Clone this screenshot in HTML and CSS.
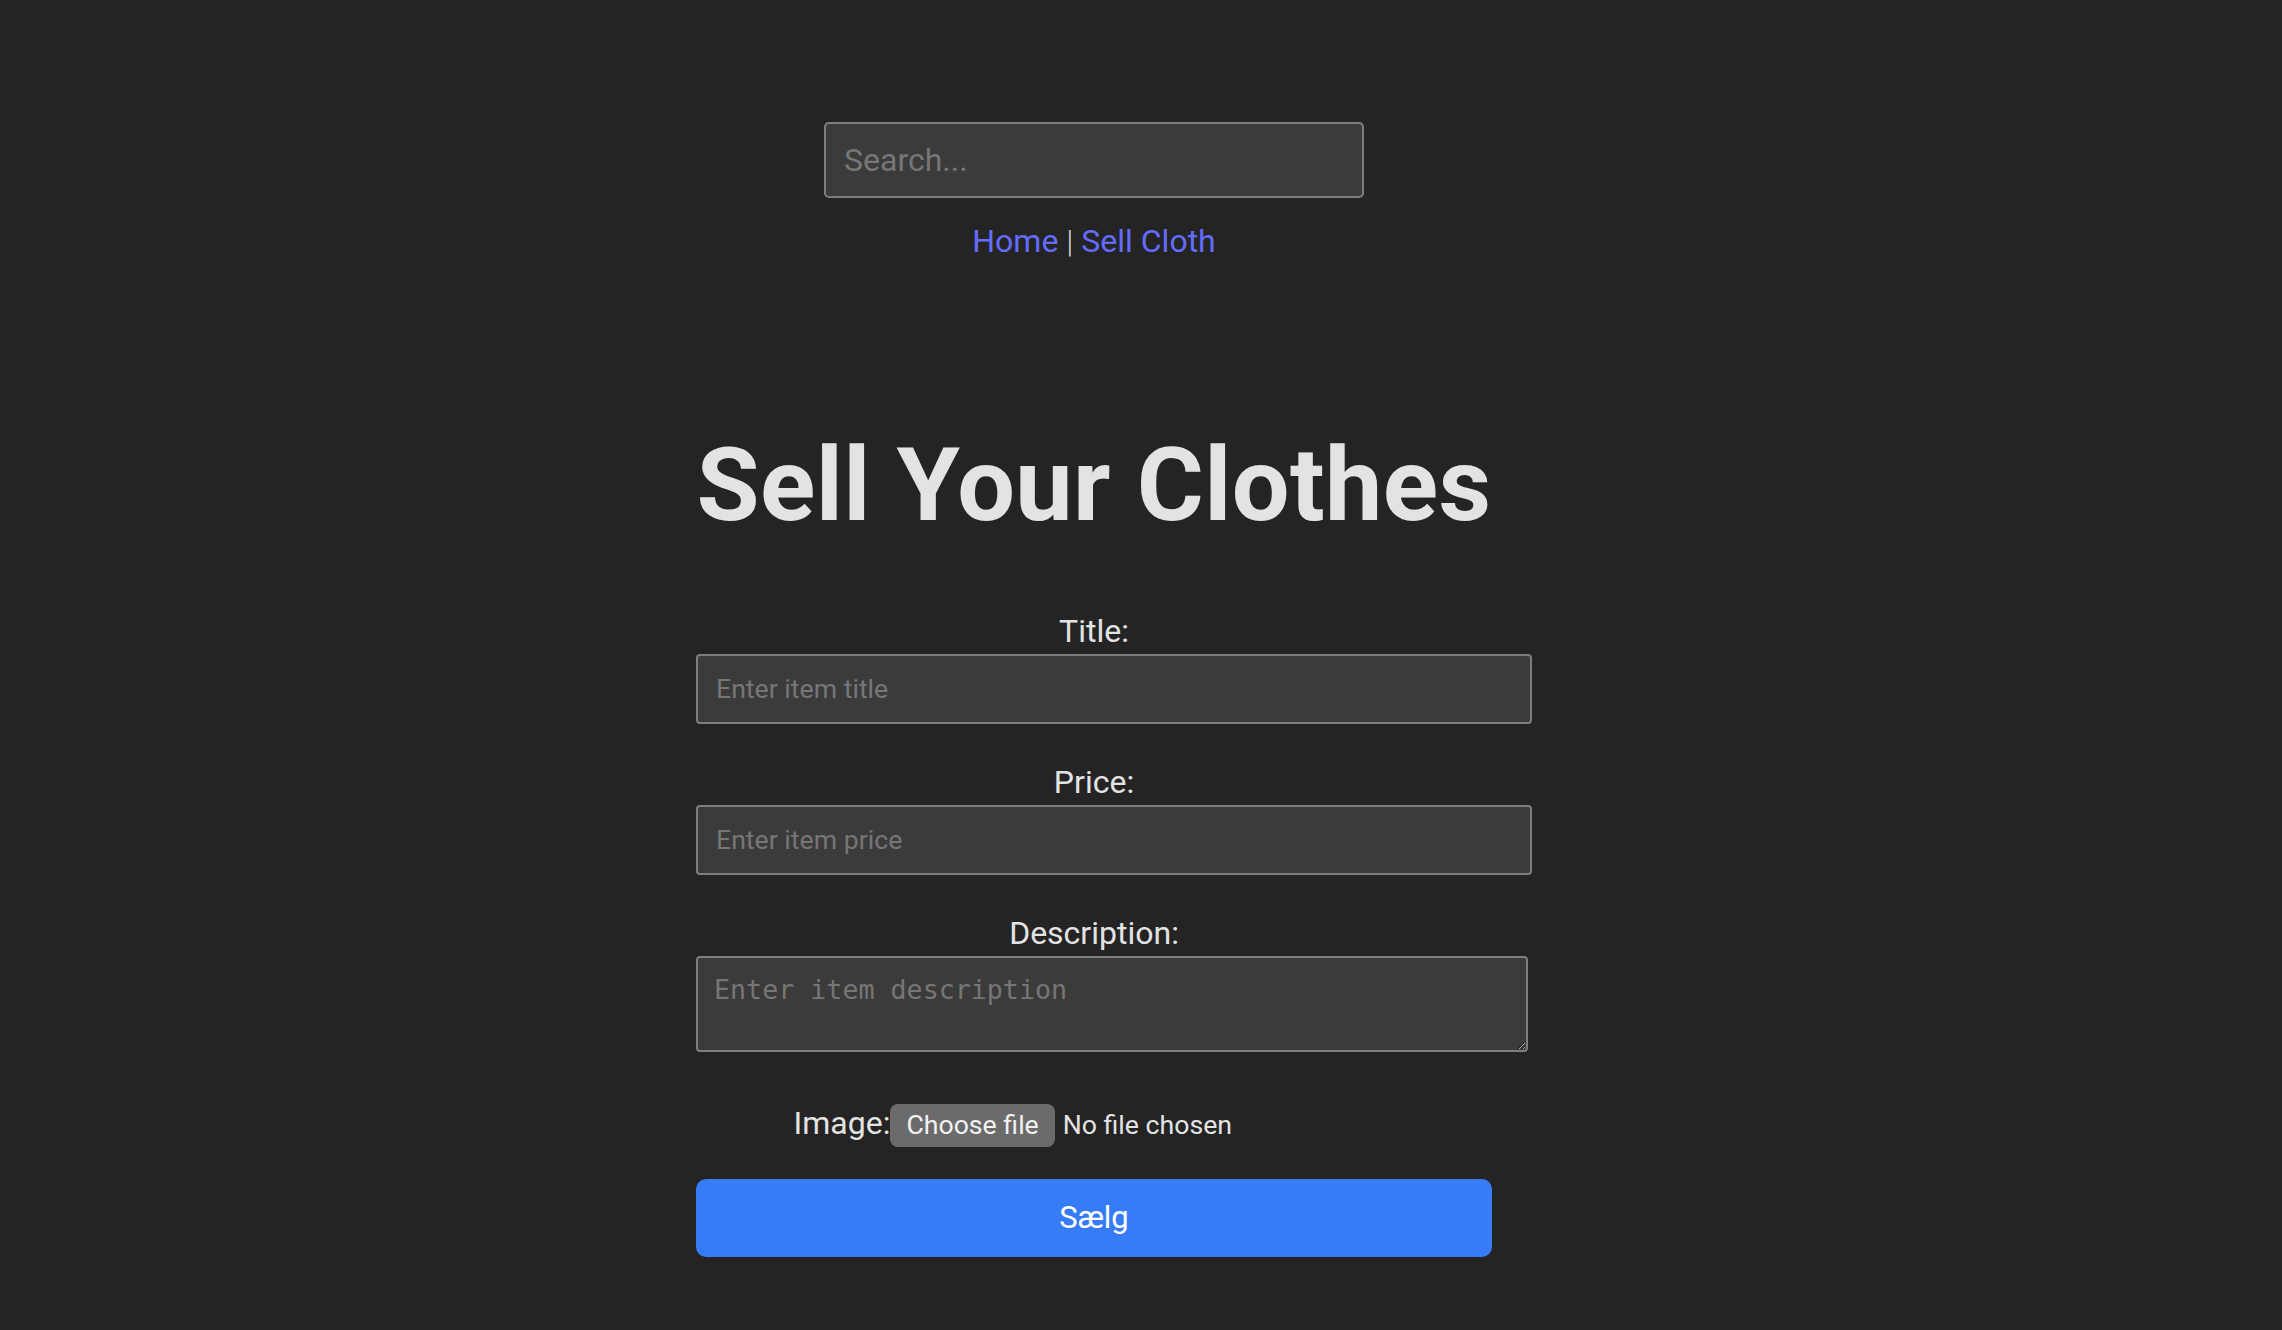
FILE: index.html
```html
<!DOCTYPE html>
<html lang="en">
<head>
<meta charset="UTF-8">
<title>Sell Your Clothes</title>
<link rel="stylesheet" href="styles.css">
</head>
<body>
<div class="app">
  <header class="header">
    <input class="search" type="text" placeholder="Search...">
    <nav class="nav"><a href="#">Home</a> <span class="sep">|</span> <a href="#">Sell Cloth</a></nav>
  </header>
  <main class="main">
    <h1 class="title">Sell Your Clothes</h1>
    <form class="form">
      <div class="group">
        <label class="label" for="t">Title:</label>
        <input class="field" id="t" type="text" placeholder="Enter item title">
      </div>
      <div class="group">
        <label class="label" for="p">Price:</label>
        <input class="field" id="p" type="text" placeholder="Enter item price">
      </div>
      <div class="group">
        <label class="label" for="d">Description:</label>
        <textarea class="area" id="d" placeholder="Enter item description"></textarea>
      </div>
      <div class="image-row"><span class="image-label">Image:</span><span class="file"><input class="file-input" id="f" type="file"><label class="file-btn" for="f">Choose file</label><span class="file-name">No file chosen</span></span></div>
      <button class="submit" type="submit">Sælg</button>
    </form>
  </main>
</div>
</body>
</html>
```
FILE: styles.css
```css
html, body {
  margin: 0;
  padding: 0;
}
body {
  background: #242424;
  color: #e3e3e3;
  font-family: Roboto, "Liberation Sans", sans-serif;
  font-size: 32px;
  line-height: 1.5;
  display: flex;
  justify-content: center;
  padding-right: 94px;
  padding-top: 122px;
  min-height: 1330px;
  box-sizing: border-box;
}
.app {
  width: 796px;
  text-align: center;
}
.header {
  display: flex;
  flex-direction: column;
  align-items: center;
}
.search {
  box-sizing: border-box;
  width: 540px;
  height: 76px;
  padding: 0 18px;
  font-family: Roboto, "Liberation Sans", sans-serif;
  font-size: 32px;
  color: #e3e3e3;
  background: #3b3b3b;
  border: 2px solid #7e7e7e;
  border-radius: 5px;
  outline: none;
}
.search::placeholder { color: #767676; }
.nav {
  margin-top: 19px;
  line-height: 48px;
  font-weight: 400;
}
.nav a {
  color: #646cff;
  text-decoration: none;
}
.sep {
  color: #d0d0d0;
  font-weight: 300;
}
.title {
  margin: 164px 0 0;
  font-size: 102.4px;
  line-height: 1.1;
  font-weight: 700;
  letter-spacing: 0.4px;
  color: #e3e3e3;
  white-space: nowrap;
}
.form {
  margin-top: 66px;
}
.group {
  margin-bottom: 35px;
}
.label {
  display: block;
  line-height: 46px;
  font-size: 32px;
}
.field, .area {
  display: block;
  width: 100%;
  margin: 0;
  background: #3b3b3b;
  border: 2px solid #7e7e7e;
  border-radius: 4px;
  color: #e3e3e3;
  font-size: 26.67px;
  outline: none;
}
.field {
  height: 66px;
  padding: 0 18px;
  font-family: Roboto, "Liberation Sans", sans-serif;
}
.area {
  height: 60px;
  padding: 16px;
  font-family: "DejaVu Sans Mono", "Liberation Mono", monospace;
  line-height: 31px;
  resize: vertical;
}
.field::placeholder, .area::placeholder { color: #767676; }
.image-row {
  margin-top: 47px;
  line-height: 48px;
  font-size: 32px;
}
.image-label {
  color: #e3e3e3;
}
.file {
  display: inline-block;
  width: 504px;
  text-align: left;
  font-size: 26.67px;
  line-height: 33px;
}
.file-input {
  display: none;
}
.file-btn {
  display: inline-block;
  background: #6b6b6b;
  color: #f2f2f2;
  border-radius: 8px;
  padding: 5px 16px;
  margin-right: 8px;
}
.file-name {
  color: #e3e3e3;
}
.submit {
  display: block;
  width: 100%;
  height: 78px;
  margin-top: 32px;
  background: #377bf6;
  color: #ffffff;
  border: none;
  border-radius: 10px;
  font-family: Roboto, "Liberation Sans", sans-serif;
  font-size: 31px;
  font-weight: 400;
}
```
